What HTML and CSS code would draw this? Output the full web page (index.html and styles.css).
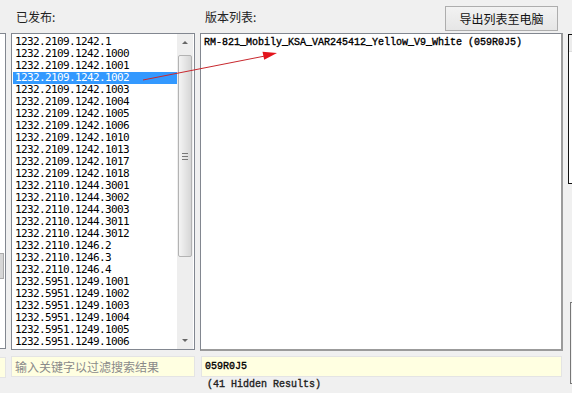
FILE: index.html
```html
<!DOCTYPE html>
<html lang="zh">
<head>
<meta charset="UTF-8">
<title>版本列表</title>
<link rel="stylesheet" href="styles.css">
</head>
<body>

<div class="window">
    <!-- left edge of the neighbour panel -->
    <div class="stub-left">
        <div class="stub-head"></div>
        <div class="stub-list"><div class="stub-thumb"></div></div>
        <div class="stub-input"></div>
    </div>

    <!-- Published column -->
    <div class="column">
        <div class="col-head"><span class="caption">已发布:</span></div>
        <div class="listbox">
            <ul class="items">
                <li>1232.2109.1242.1</li>
                <li>1232.2109.1242.1000</li>
                <li>1232.2109.1242.1001</li>
                <li class="selected">1232.2109.1242.1002</li>
                <li>1232.2109.1242.1003</li>
                <li>1232.2109.1242.1004</li>
                <li>1232.2109.1242.1005</li>
                <li>1232.2109.1242.1006</li>
                <li>1232.2109.1242.1010</li>
                <li>1232.2109.1242.1013</li>
                <li>1232.2109.1242.1017</li>
                <li>1232.2109.1242.1018</li>
                <li>1232.2110.1244.3001</li>
                <li>1232.2110.1244.3002</li>
                <li>1232.2110.1244.3003</li>
                <li>1232.2110.1244.3011</li>
                <li>1232.2110.1244.3012</li>
                <li>1232.2110.1246.2</li>
                <li>1232.2110.1246.3</li>
                <li>1232.2110.1246.4</li>
                <li>1232.5951.1249.1001</li>
                <li>1232.5951.1249.1002</li>
                <li>1232.5951.1249.1003</li>
                <li>1232.5951.1249.1004</li>
                <li>1232.5951.1249.1005</li>
                <li>1232.5951.1249.1006</li>
            </ul>
            <div class="scrollbar">
                <div class="arrow up"></div>
                <div class="track">
                    <div class="thumb"><span class="grip"></span></div>
                </div>
                <div class="arrow down"></div>
            </div>
        </div>
        <div class="filter placeholder">输入关键字以过滤搜索结果</div>
    </div>

    <!-- Version column -->
    <div class="column">
        <div class="col-head split">
            <span class="caption">版本列表:</span>
            <button class="export">导出列表至电脑</button>
        </div>
        <div class="listbox versions">
            <div class="version">RM-821_Mobily_KSA_VAR245412_Yellow_V9_White (059R0J5)</div>
        </div>
        <div class="filter mono">059R0J5</div>
        <div class="hidden-count">(41 Hidden Results)</div>
    </div>

    <!-- right edge of the neighbour panel -->
    <div class="stub-right">
        <div class="stub-box dark"><div class="stub-band"></div></div>
        <div class="stub-bar"></div>
        <div class="stub-box"></div>
    </div>
</div>

<!-- red annotation arrow -->
<svg class="annotation" width="572" height="393" viewBox="0 0 572 393">
    <line x1="143" y1="80" x2="265" y2="56" stroke="#c8282e" stroke-width="1"/>
    <polygon points="277,53 262.5,51.8 264.2,59.8" fill="#e3141c"/>
</svg>

</body>
</html>
```

FILE: styles.css
```css
body {
    margin: 0;
    width: 572px;
    height: 393px;
    overflow: hidden;
    background-color: #f0f0f0;
    font-family: "Noto Sans CJK SC", sans-serif;
    font-size: 12px;
    color: #000;
    position: relative;
}

.window {
    display: grid;
    grid-template-columns: 6px 184px 363px 1fr;
    column-gap: 5px;
    height: 393px;
}

.column {
    display: flex;
    flex-direction: column;
}

/* captions row */
.col-head {
    height: 33px;
    display: flex;
    align-items: flex-start;
}

.col-head.split {
    justify-content: space-between;
}

.caption {
    margin-top: 8px;
    margin-left: 5px;
    line-height: 18px;
    color: #222;
}

.export {
    margin-top: 6px;
    margin-right: 5px;
    width: 113px;
    height: 25px;
    padding: 0;
    font-family: "Noto Sans CJK SC", sans-serif;
    font-size: 12px;
    color: #111;
    background: linear-gradient(#f2f2f2, #e6e6e6);
    border: 1px solid #adadad;
    border-radius: 0;
}

/* list boxes */
.listbox {
    height: 317px;
    box-sizing: border-box;
    background: #fff;
    border: 1px solid #828790;
    display: flex;
}

.items {
    list-style: none;
    margin: 0;
    padding: 2px 0 0 1px;
    flex: 1;
    overflow: hidden;
    font-family: "DejaVu Sans Mono", monospace;
    font-size: 11px;
    letter-spacing: -0.62px;
}

.items li {
    height: 12px;
    line-height: 12px;
    padding-left: 2px;
    white-space: nowrap;
}

.items li.selected {
    background-color: #3399ff;
    color: #fff;
}

.scrollbar {
    width: 16px;
    margin-right: 1px;
    display: flex;
    flex-direction: column;
    background: #eeeeee;
}

.arrow {
    height: 17px;
    display: flex;
    align-items: center;
    justify-content: center;
}

.arrow::before {
    content: '';
    border-left: 3px solid transparent;
    border-right: 3px solid transparent;
}

.arrow.up::before {
    border-bottom: 3px solid #666;
}

.arrow.down::before {
    border-top: 3px solid #666;
}

.track {
    flex: 1;
    padding: 4px 1px 0 1px;
}

.thumb {
    height: 202px;
    box-sizing: border-box;
    border: 1px solid #b3b3b3;
    border-radius: 2px;
    background: linear-gradient(to right, #f4f4f4, #e2e2e2 60%, #d6d6d6);
    display: flex;
    align-items: center;
    justify-content: center;
}

.grip {
    width: 6px;
    height: 5px;
    border-top: 1px solid #777;
    border-bottom: 1px solid #777;
    position: relative;
}

.grip::after {
    content: '';
    position: absolute;
    left: 0;
    right: 0;
    top: 2px;
    border-top: 1px solid #777;
}

.versions {
    border-right: 2px solid #9b9b9b;
    border-bottom: 2px solid #9b9b9b;
    height: 318px;
    padding: 3px 0 0 3px;
}

.version {
    font-family: "Liberation Mono", monospace;
    font-size: 10px;
    line-height: 12px;
    white-space: nowrap;
    -webkit-text-stroke: 0.35px #000;
}

/* filter boxes */
.filter {
    margin-top: 6px;
    height: 21px;
    box-sizing: border-box;
    line-height: 19px;
    padding-left: 3px;
    background-color: #ffffe1;
    border: 1px solid #e4e4e4;
    white-space: nowrap;
}

.placeholder {
    color: #8a8a8a;
}

.mono {
    margin-top: 5px;
    margin-left: 1px;
    margin-right: 1px;
    font-family: "Liberation Mono", monospace;
    font-size: 10px;
    -webkit-text-stroke: 0.35px #000;
}

.hidden-count {
    margin-top: 1px;
    padding-left: 7px;
    font-family: "Liberation Mono", monospace;
    font-size: 10px;
    line-height: 14px;
    color: #222;
    -webkit-text-stroke: 0.35px #222;
}

/* neighbour panel stubs */
.stub-left {
    display: flex;
    flex-direction: column;
}

.stub-head {
    height: 33px;
}

.stub-list {
    height: 316px;
    box-sizing: border-box;
    border: 1px solid #828790;
    border-left: none;
    background: #fff;
    position: relative;
}

.stub-thumb {
    position: absolute;
    left: 0;
    top: 219px;
    width: 3px;
    height: 24px;
    background: #d6d6d6;
    border: 1px solid #aaa;
    border-left: none;
}

.stub-input {
    margin-top: 8px;
    height: 19px;
    background: #ffffe1;
    border: 1px solid #e4e4e4;
    border-left: none;
}

.stub-right {
    display: flex;
    flex-direction: column;
}

.stub-box {
    margin-top: 30px;
    height: 80px;
    border: 1px solid #777;
    border-right: none;
    margin-left: 2px;
}

.stub-box.dark {
    margin-top: 34px;
    margin-left: 0;
    height: 150px;
    box-sizing: border-box;
    border-color: #111;
    background: #fff;
}

.stub-band {
    height: 16px;
    background: #ececec;
    border-bottom: 1px solid #ddd;
}

.stub-bar {
    margin-top: 68px;
    margin-left: 4px;
    height: 20px;
    border-left: 1px solid #aaa;
}

.annotation {
    position: absolute;
    left: 0;
    top: 0;
    pointer-events: none;
}
```
